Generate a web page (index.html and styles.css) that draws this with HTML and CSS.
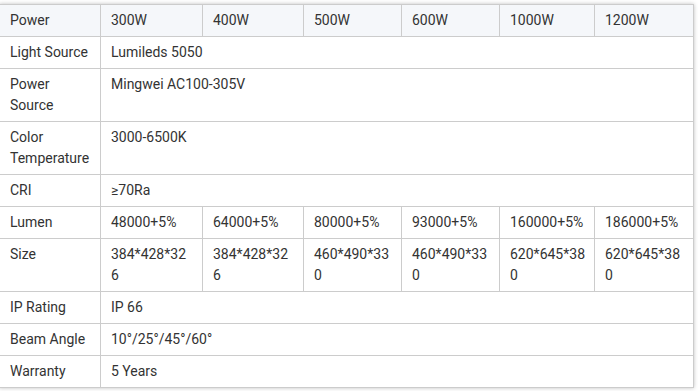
FILE: index.html
```html
<!DOCTYPE html>
<html>
<head>
<meta charset="utf-8">
<link rel="stylesheet" href="styles.css">
</head>
<body>
<div class="wrap">
<table class="spec">
<colgroup>
<col class="c1"><col class="c2"><col class="c3"><col class="c4"><col class="c5"><col class="c6"><col class="c7">
</colgroup>
<thead>
<tr><th>Power</th><th>300W</th><th>400W</th><th>500W</th><th>600W</th><th>1000W</th><th>1200W</th></tr>
</thead>
<tbody>
<tr><td>Light Source</td><td colspan="6">Lumileds 5050</td></tr>
<tr><td>Power Source</td><td colspan="6">Mingwei AC100-305V</td></tr>
<tr><td>Color Temperature</td><td colspan="6">3000-6500K</td></tr>
<tr><td>CRI</td><td colspan="6">≥70Ra</td></tr>
<tr><td>Lumen</td><td>48000+5%</td><td>64000+5%</td><td>80000+5%</td><td>93000+5%</td><td>160000+5%</td><td>186000+5%</td></tr>
<tr><td>Size</td><td>384*428*326</td><td>384*428*326</td><td>460*490*330</td><td>460*490*330</td><td>620*645*380</td><td>620*645*380</td></tr>
<tr><td>IP Rating</td><td colspan="6">IP 66</td></tr>
<tr><td>Beam Angle</td><td colspan="6">10°/25°/45°/60°</td></tr>
<tr><td>Warranty</td><td colspan="6">5 Years</td></tr>
</tbody>
</table>
</div>
</body>
</html>
```

FILE: styles.css
```css
html, body {
  margin: 0;
  padding: 0;
  background: #fff;
}
.wrap {
  padding-top: 4px;
  overflow: hidden;
  height: 391px;
  box-sizing: border-box;
}
.spec {
  margin-left: -1px;
  width: 695px;
  table-layout: fixed;
  border-collapse: collapse;
  font-family: Roboto, "Liberation Sans", sans-serif;
  font-size: 14px;
  line-height: 21px;
  color: #333;
  box-shadow: 0 0 4px rgba(0, 0, 0, 0.25);
}
.c1 { width: 101px; }
.c2 { width: 102px; }
.c3 { width: 101px; }
.c4 { width: 98px; }
.c5 { width: 98px; }
.c6 { width: 95px; }
.c7 { width: 99px; }
.spec th, .spec td {
  border: 1px solid #ccc;
  padding: 5px 9px 5px 10px;
  text-align: left;
  vertical-align: top;
  font-weight: 400;
  overflow-wrap: break-word;
}
.spec thead th {
  background: #f5f7fa;
}
```
